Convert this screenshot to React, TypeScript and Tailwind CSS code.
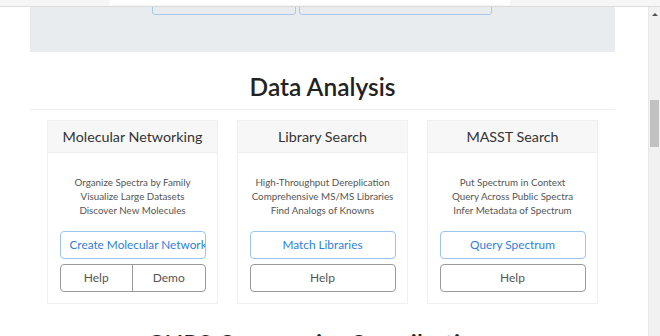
import React from "react";

const font = { fontFamily: 'Lato, "Noto Sans", sans-serif' };

type CardProps = {
  title: string;
  lines: string[];
  primary: string;
  secondary: string[];
};

function Card({ title, lines, primary, secondary }: CardProps) {
  return (
    <div className="w-[171px] border border-[#f0f0f0] bg-white flex flex-col">
      <div className="h-[32px] bg-[#f7f7f7] border-b border-[#efefef] flex items-center justify-center text-[14.3px] text-[#333]">
        {title}
      </div>
      <div className="px-[12px] pt-[22px] pb-[11px] flex flex-col items-center">
        <div className="text-[9.8px] leading-[14px] text-[#555] text-center whitespace-nowrap">
          {lines.map((l) => (
            <div key={l}>{l}</div>
          ))}
        </div>
        <div className="mt-[14px] w-[146px] h-[28px] border border-[#9cc4ee] rounded-[4px] text-[#2d7fe0] text-[11.8px] leading-[26px] text-center whitespace-nowrap overflow-hidden px-[9px]">
          {primary}
        </div>
        <div className="mt-[5px] w-[146px] h-[28px] border border-[#9a9a9a] rounded-[4px] flex text-[#555] text-[12px]">
          {secondary.map((s, i) => (
            <div
              key={s}
              className={
                "flex-1 flex items-center justify-center" +
                (i > 0 ? " border-l border-[#9a9a9a]" : "")
              }
            >
              {s}
            </div>
          ))}
        </div>
      </div>
    </div>
  );
}

export default function App() {
  return (
    <div className="w-[660px] h-[336px] overflow-hidden bg-white flex flex-col" style={font}>
      {/* top strip */}
      <div className="h-[7px] shrink-0 bg-[#f6f6f6] border-b border-[#dcdcdc] flex">
        <div className="w-[110px]" />
        <div className="w-[400px] h-[5px] bg-white" />
        <div className="flex-1" />
      </div>
      <div className="flex flex-1 min-h-0">
        <div className="flex-1 min-w-0">
          <div className="w-[585px] ml-[30px]">
            {/* jumbotron */}
            <div className="h-[45px] bg-[#e9ecef] overflow-hidden">
              <div className="flex gap-[3px] ml-[122px] -mt-[14px]">
                <div className="w-[144px] h-[22px] border border-[#a9c8ea] rounded-[3px]" />
                <div className="w-[193px] h-[22px] border border-[#a9c8ea] rounded-[3px]" />
              </div>
            </div>
            <h2 className="text-center text-[24.5px] font-semibold text-[#222] leading-[32px] mt-[19px] pb-[6px] border-b border-[#efefef]">
              Data Analysis
            </h2>
            <div className="flex gap-[19px] pl-[17px] mt-[10px]">
              <Card
                title="Molecular Networking"
                lines={["Organize Spectra by Family", "Visualize Large Datasets", "Discover New Molecules"]}
                primary="Create Molecular Network"
                secondary={["Help", "Demo"]}
              />
              <Card
                title="Library Search"
                lines={["High-Throughput Dereplication", "Comprehensive MS/MS Libraries", "Find Analogs of Knowns"]}
                primary="Match Libraries"
                secondary={["Help"]}
              />
              <Card
                title="MASST Search"
                lines={["Put Spectrum in Context", "Query Across Public Spectra", "Infer Metadata of Spectrum"]}
                primary="Query Spectrum"
                secondary={["Help"]}
              />
            </div>
            <h2 className="text-center text-[24.5px] font-semibold text-[#222] leading-[32px] mt-[24px]">
              GNPS Community Contributions
            </h2>
          </div>
        </div>
        {/* scrollbar */}
        <div className="w-[12px] shrink-0 bg-[#f1f1f1] border-l border-[#e8e8e8] flex flex-col items-center">
          <div className="h-[14px] flex items-center justify-center">
            <div className="w-0 h-0 border-l-[3px] border-r-[3px] border-b-[3px] border-l-transparent border-r-transparent border-b-[#505050]" />
          </div>
          <div className="mt-[79px] w-[9px] h-[47px] bg-[#c1c1c1]" />
        </div>
      </div>
    </div>
  );
}
